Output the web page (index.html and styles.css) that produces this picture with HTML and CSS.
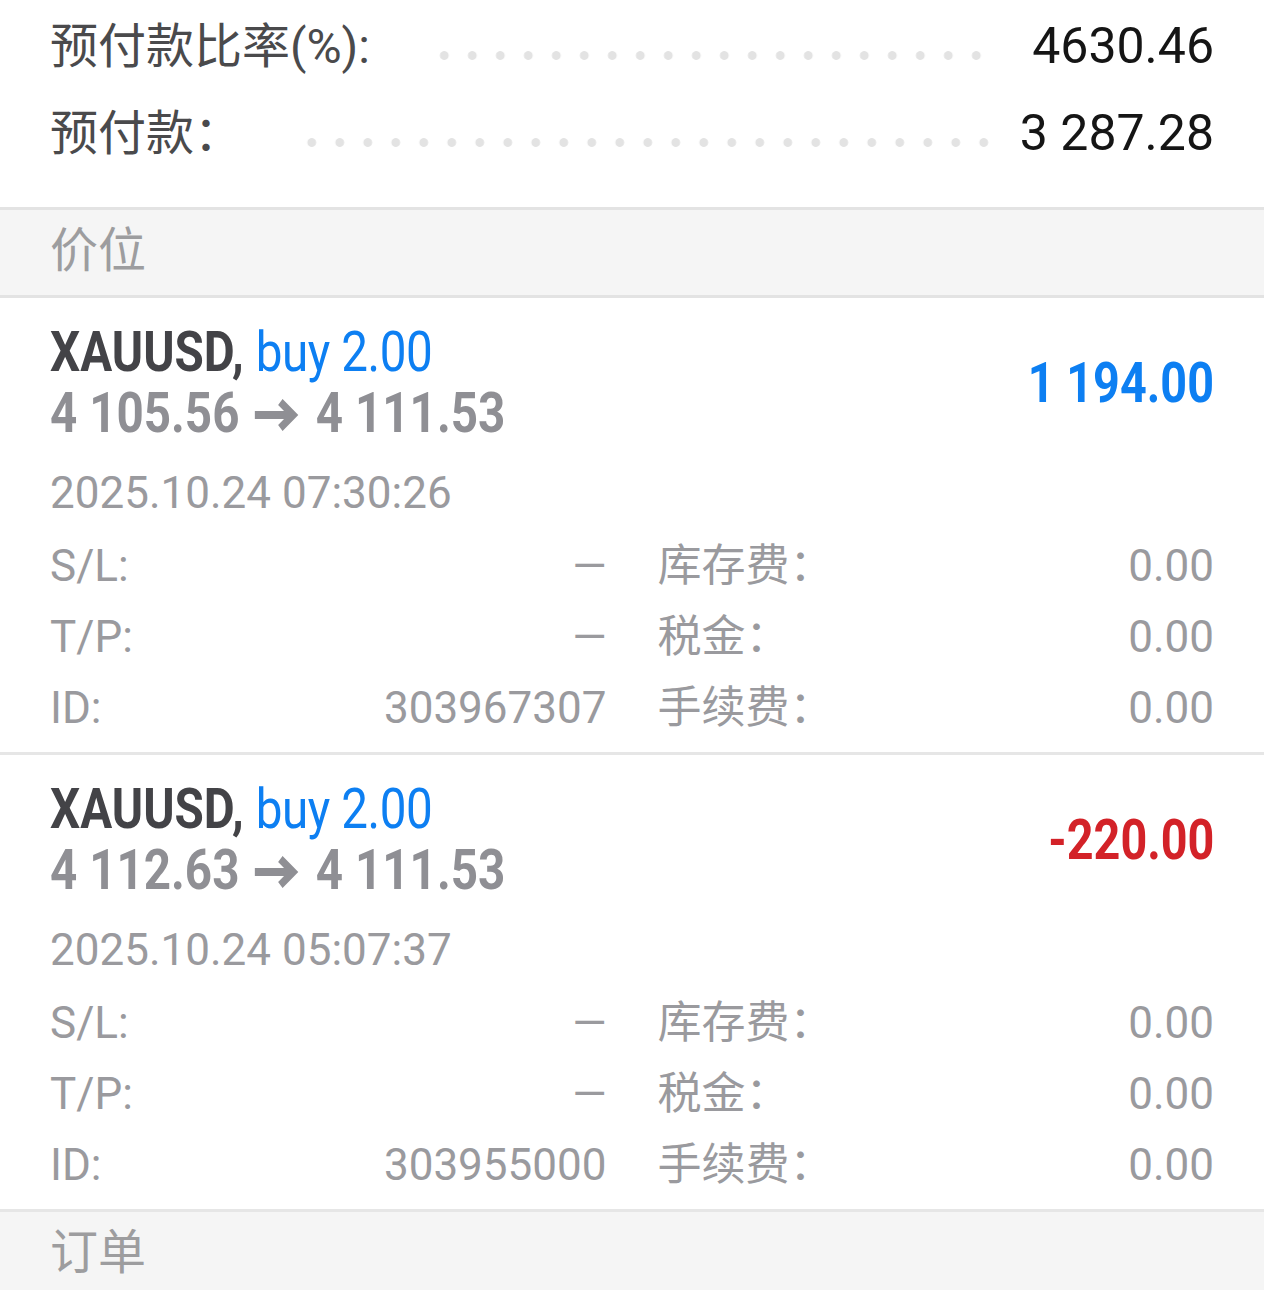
FILE: index.html
```html
<!DOCTYPE html>
<html lang="zh">
<head>
    <meta charset="UTF-8">
    <meta name="viewport" content="width=device-width, initial-scale=1.0">
    <title>交易</title>
    <link rel="stylesheet" href="styles.css">
</head>
<body>
    <div class="screen">
        <!-- 账户汇总 -->
        <section class="summary">
            <div class="sum-row">
                <span class="sum-label">预付款比率(%):</span>
                <span class="leader leader-rate"></span>
                <span class="sum-value">4630.46</span>
            </div>
            <div class="sum-row">
                <span class="sum-label">预付款：</span>
                <span class="leader leader-margin"></span>
                <span class="sum-value">3 287.28</span>
            </div>
        </section>

        <div class="section-head">价位</div>

        <!-- 持仓 1 -->
        <div class="trade">
            <div class="trade-head">
                <div class="trade-title">
                    <div class="symbol-line"><span class="symbol">XAUUSD,</span> <span class="side">buy 2.00</span></div>
                    <div class="price-line">4 105.56 <svg class="arrow" viewBox="0 0 54 32" width="54" height="32"><path d="M2 16H46M32 3L47 16L32 29" fill="none" stroke="currentColor" stroke-width="8"/></svg> 4 111.53</div>
                </div>
                <div class="profit">1 194.00</div>
            </div>
            <div class="trade-time">2025.10.24 07:30:26</div>
            <div class="trade-details">
                <div class="detail"><span>S/L:</span><span>—</span></div>
                <div class="detail"><span>库存费：</span><span>0.00</span></div>
                <div class="detail"><span>T/P:</span><span>—</span></div>
                <div class="detail"><span>税金：</span><span>0.00</span></div>
                <div class="detail"><span>ID:</span><span>303967307</span></div>
                <div class="detail"><span>手续费：</span><span>0.00</span></div>
            </div>
        </div>

        <!-- 持仓 2 -->
        <div class="trade">
            <div class="trade-head">
                <div class="trade-title">
                    <div class="symbol-line"><span class="symbol">XAUUSD,</span> <span class="side">buy 2.00</span></div>
                    <div class="price-line">4 112.63 <svg class="arrow" viewBox="0 0 54 32" width="54" height="32"><path d="M2 16H46M32 3L47 16L32 29" fill="none" stroke="currentColor" stroke-width="8"/></svg> 4 111.53</div>
                </div>
                <div class="profit loss">-220.00</div>
            </div>
            <div class="trade-time">2025.10.24 05:07:37</div>
            <div class="trade-details">
                <div class="detail"><span>S/L:</span><span>—</span></div>
                <div class="detail"><span>库存费：</span><span>0.00</span></div>
                <div class="detail"><span>T/P:</span><span>—</span></div>
                <div class="detail"><span>税金：</span><span>0.00</span></div>
                <div class="detail"><span>ID:</span><span>303955000</span></div>
                <div class="detail"><span>手续费：</span><span>0.00</span></div>
            </div>
        </div>

        <div class="section-head">订单</div>
    </div>
</body>
</html>
```

FILE: styles.css
```css
html, body {
    margin: 0;
    padding: 0;
    background: #fff;
}

body {
    font-family: Roboto, "Noto Sans CJK SC", sans-serif;
    color: #444;
}

.screen {
    width: 100%;
}

/* 汇总区 */
.summary {
    padding: 3px 50px 30px;
    border-bottom: 3px solid #e3e3e3;
}

.sum-row {
    display: flex;
    align-items: center;
    height: 87px;
    font-size: 48px;
    line-height: 87px;
    white-space: nowrap;
}

.sum-label {
    color: #4a4a4c;
}

.sum-value {
    font-size: 50px;
    color: #151515;
}

/* 点状引导线 */
.leader {
    flex: 1;
    height: 9px;
    margin-top: 17px;
    background: radial-gradient(circle at center, #e3e3e3 4px, rgba(227, 227, 227, 0) 4.8px) right center / 28px 9px repeat-x;
}

.leader-rate {
    margin-left: 62px;
    margin-right: 42px;
}

.leader-margin {
    margin-left: 58px;
    margin-right: 22px;
}

/* 分组标题 */
.section-head {
    height: 85px;
    padding: 0 50px;
    background: #f5f5f5;
    border-bottom: 3px solid #e3e3e3;
    font-size: 48px;
    line-height: 82px;
    color: #9d9d9f;
}

/* 持仓卡片 */
.trade {
    padding: 24px 50px 8px;
    border-bottom: 3px solid #e6e6e6;
}

.trade-head {
    display: flex;
    justify-content: space-between;
    align-items: center;
}

.trade-title {
    transform: scaleX(0.85);
    transform-origin: left center;
}

.symbol-line, .price-line {
    font-size: 56px;
    line-height: 61px;
    white-space: nowrap;
}

.symbol {
    font-weight: 700;
    color: #434347;
}

.side {
    color: #0d7ff2;
    letter-spacing: -0.5px;
}

.price-line {
    font-weight: 700;
    color: #8f8f94;
}

.arrow {
    vertical-align: 1px;
    margin: 0 6px 0 2px;
}

.profit {
    font-size: 55px;
    font-weight: 700;
    color: #0d7ff2;
    white-space: nowrap;
    transform: scaleX(0.85);
    transform-origin: right center;
}

.profit.loss {
    color: #d32228;
}

.trade-time {
    margin-top: 19px;
    font-size: 44px;
    line-height: 60px;
    color: #9a9a9e;
}

.trade-details {
    display: grid;
    grid-template-columns: 1fr 1fr;
    column-gap: 51px;
    margin-top: 8px;
    font-size: 44px;
    line-height: 71px;
    color: #9a9a9e;
}

.detail {
    display: flex;
    justify-content: space-between;
    white-space: nowrap;
}
```
